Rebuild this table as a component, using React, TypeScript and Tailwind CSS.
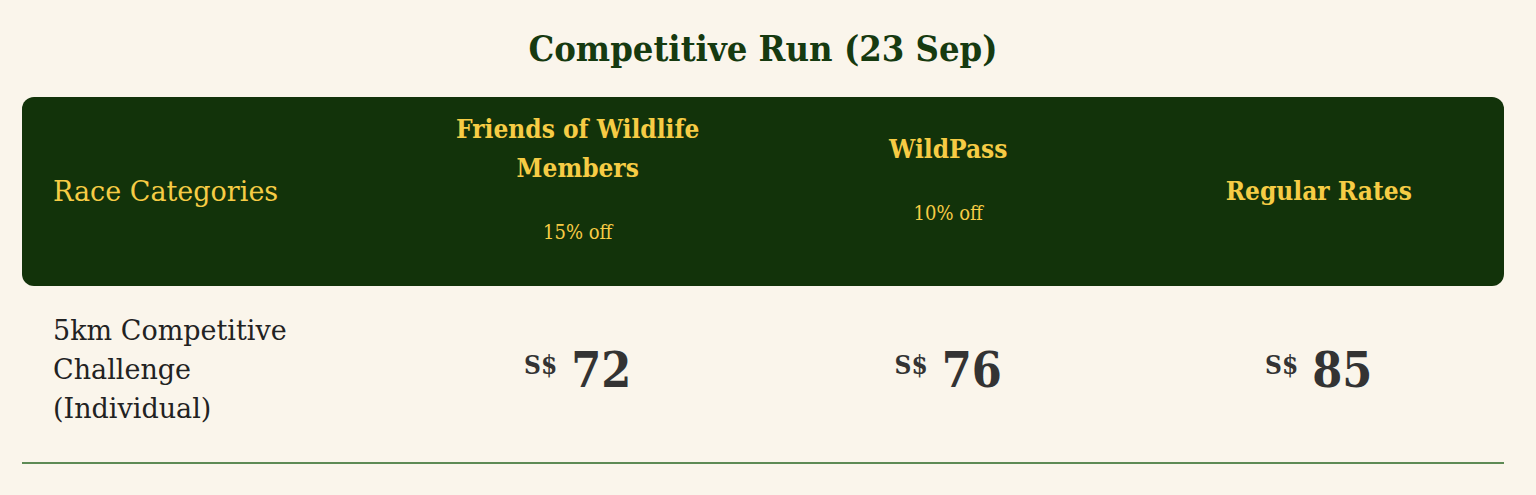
const tiers = [
  { name: ["Friends of Wildlife", "Members"], off: "15% off" },
  { name: ["WildPass"], off: "10% off" },
];

export default function App() {
  return (
    <div className="min-h-[495px] bg-[#faf5eb] pl-[22px] pr-[32px] pt-[24px] font-['DejaVu_Serif',serif] [font-stretch:condensed]">
      <h1 className="text-center text-[36px] leading-[48px] font-bold text-[#163a10]">
        Competitive Run (23 Sep)
      </h1>

      <div className="mt-[25px] grid grid-cols-4 h-[189px] rounded-[12px] bg-[#12330a] text-[#f6cc45]">
        <div className="flex items-center pl-[31px] text-[27px] leading-[39px] [font-stretch:normal]">
          Race Categories
        </div>
        {tiers.map((t) => (
          <div key={t.off} className="flex flex-col items-center justify-center text-center">
            <h3 className="text-[26px] leading-[39px] font-bold">
              {t.name.map((line) => (
                <span key={line} className="block">{line}</span>
              ))}
            </h3>
            <p className="mt-[29px] mb-[26px] text-[20px] leading-[30px]">{t.off}</p>
          </div>
        ))}
        <div className="flex items-center justify-center">
          <h3 className="text-[26px] leading-[39px] font-bold">Regular Rates</h3>
        </div>
      </div>

      <div className="grid grid-cols-4 border-b-2 border-[#5d8a55] pt-[25px] pb-[34px]">
        <div className="pl-[31px] text-[27px] leading-[39px] text-[#222] [font-stretch:normal]">
          5km Competitive
          <br />
          Challenge
          <br />
          (Individual)
        </div>
        {[72, 76, 85].map((p) => (
          <div key={p} className="flex items-center justify-center text-[#333]">
            <span className="text-[26px] font-bold mr-[14px] -mt-[8px]">S$</span>
            <span className="text-[48px] font-bold">{p}</span>
          </div>
        ))}
      </div>
    </div>
  );
}
